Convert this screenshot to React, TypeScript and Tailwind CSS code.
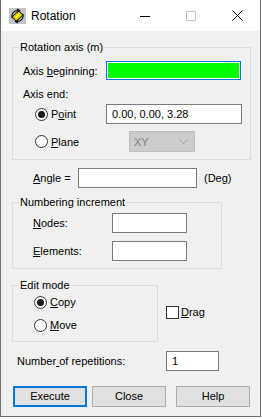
import React from 'react';

const font = "font-['Liberation_Sans','Arial',sans-serif]";

const Radio = ({ checked }: { checked?: boolean }) => (
  <span className="w-[13px] h-[13px] shrink-0 rounded-full border border-[#333333] bg-white flex items-center justify-center">
    {checked && <span className="w-[7px] h-[7px] rounded-full bg-[#1a1a1a]" />}
  </span>
);

const Field = ({ className = '', value = '' }: { className?: string; value?: string }) => (
  <div className={`h-[20px] bg-white border border-[#7a7a7a] flex items-center px-[5px] leading-none ${className}`}>
    {value}
  </div>
);

const Group = ({ title, className = '', children }: { title: string; className?: string; children: React.ReactNode }) => (
  <fieldset className={`border border-[#dcdcdc] ${className}`}>
    <legend className="ml-[6px] px-[1px] leading-[16px]">{title}</legend>
    {children}
  </fieldset>
);

const AppIcon = () => (
  <svg width="17" height="16" viewBox="0 0 17 16" className="shrink-0">
    <rect x="0" y="0" width="17" height="16" fill="#c4c4c4" />
    <g transform="rotate(-45 8.5 8)">
      <rect x="4" y="5" width="9" height="6" fill="#ffff00" stroke="#1a1a1a" strokeWidth="1" />
      <rect x="5.5" y="6.5" width="6" height="3" fill="none" stroke="#e0c000" strokeWidth="1" />
    </g>
    <path d="M3 10 A6 6 0 0 1 9 2.5" fill="none" stroke="#111" strokeWidth="1.2" />
    <path d="M8 1 L10.5 2.6 L8 4.3" fill="none" stroke="#111" strokeWidth="1.2" />
    <path d="M14 6 A6 6 0 0 1 8 13.5" fill="none" stroke="#111" strokeWidth="1.2" />
    <path d="M9 12 L6.5 13.5 L9 15" fill="none" stroke="#111" strokeWidth="1.2" />
  </svg>
);

const TitleBar = () => (
  <div className="h-[31px] bg-white flex items-center">
    <div className="ml-[8px]">
      <AppIcon />
    </div>
    <span className="ml-[5px] text-[12px] text-black">Rotation</span>
    <div className="ml-auto flex h-full">
      <div className="w-[46px] flex items-center justify-center">
        <svg width="10" height="10" viewBox="0 0 10 10">
          <line x1="0" y1="5.5" x2="10" y2="5.5" stroke="#000" strokeWidth="1" />
        </svg>
      </div>
      <div className="w-[46px] flex items-center justify-center">
        <svg width="10" height="10" viewBox="0 0 10 10">
          <rect x="0.5" y="0.5" width="9" height="9" fill="none" stroke="#c8c8c8" strokeWidth="1" />
        </svg>
      </div>
      <div className="w-[46px] flex items-center justify-center">
        <svg width="11" height="11" viewBox="0 0 11 11">
          <line x1="0.5" y1="0.5" x2="10.5" y2="10.5" stroke="#000" strokeWidth="1" />
          <line x1="10.5" y1="0.5" x2="0.5" y2="10.5" stroke="#000" strokeWidth="1" />
        </svg>
      </div>
    </div>
  </div>
);

const Button = ({ label, primary }: { label: string; primary?: boolean }) => (
  <button
    className={`w-[74px] h-[21px] bg-[#e1e1e1] flex items-center justify-center leading-none ${
      primary ? 'border-2 border-[#0078d7]' : 'border border-[#adadad]'
    }`}
  >
    {label}
  </button>
);

const App = () => {
  return (
    <div className={`w-[262px] h-[419px] bg-white ${font} text-[11px] leading-[16px] text-black whitespace-nowrap`}>
      <div className="w-[261px] h-[417px] border-l border-r border-b border-[#707070] flex flex-col">
        <TitleBar />
        <div className="flex-1 bg-[#f0f0f0] pl-[11px]">
          {/* Rotation axis */}
          <Group title="Rotation axis (m)" className="mt-[8px] w-[239px]">
            <div className="pl-[10px] pb-[7px]">
              <div className="flex items-center mt-[6px]">
                <span className="w-[83px]">
                  Axis <u>b</u>eginning:
                </span>
                <div className="w-[135px] h-[19px] border border-[#0078d7] bg-white p-[1px]">
                  <div className="w-full h-full bg-[#00ff00]" />
                </div>
              </div>
              <div className="mt-[6px]">Axis end:</div>
              <div className="flex items-center mt-[2px]">
                <div className="w-[83px] flex items-center">
                  <span className="ml-[12px]"><Radio checked /></span>
                  <span className="ml-[3px]">
                    P<u>o</u>int
                  </span>
                </div>
                <Field className="w-[136px]" value="0.00, 0.00, 3.28" />
              </div>
              <div className="flex items-center mt-[7px]">
                <div className="w-[83px] flex items-center">
                  <span className="ml-[12px]"><Radio /></span>
                  <span className="ml-[3px]">
                    <u>P</u>lane
                  </span>
                </div>
                <div className="ml-[23px] w-[66px] h-[21px] bg-[#cccccc] border border-[#bfbfbf] flex items-center justify-between pl-[4px] pr-[6px] text-[#838383]">
                  <span>XY</span>
                  <svg width="9" height="5" viewBox="0 0 9 5">
                    <polyline points="0.5,0.5 4.5,4.5 8.5,0.5" fill="none" stroke="#a0a0a0" strokeWidth="1" />
                  </svg>
                </div>
              </div>
            </div>
          </Group>

          {/* Angle */}
          <div className="flex items-center mt-[8px]">
            <span className="ml-[21px] w-[45px]">
              <u>A</u>ngle =
            </span>
            <Field className="w-[119px]" />
            <span className="ml-[7px]">(Deg)</span>
          </div>

          {/* Numbering increment */}
          <Group title="Numbering increment" className="mt-[6px] w-[210px]">
            <div className="pl-[20px] pb-[7px]">
              <div className="flex items-center mt-[3px]">
                <span className="w-[79px]">
                  <u>N</u>odes:
                </span>
                <Field className="w-[75px]" />
              </div>
              <div className="flex items-center mt-[8px]">
                <span className="w-[79px]">
                  <u>E</u>lements:
                </span>
                <Field className="w-[75px]" />
              </div>
            </div>
          </Group>

          {/* Edit mode + Drag */}
          <div className="flex items-start mt-[8px]">
            <Group title="Edit mode" className="w-[146px]">
              <div className="pl-[21px] pb-[8px]">
                <div className="flex items-center mt-[1px]">
                  <Radio checked />
                  <span className="ml-[3px]">
                    <u>C</u>opy
                  </span>
                </div>
                <div className="flex items-center mt-[7px]">
                  <Radio />
                  <span className="ml-[3px]">
                    <u>M</u>ove
                  </span>
                </div>
              </div>
            </Group>
            <div className="flex items-center ml-[8px] mt-[27px]">
              <span className="w-[13px] h-[13px] border border-[#333333] bg-white" />
              <span className="ml-[2px]">
                <u>D</u>rag
              </span>
            </div>
          </div>

          {/* Repetitions */}
          <div className="flex items-center mt-[9px]">
            <span className="ml-[5px] w-[149px]">
              Number<u> </u>of repetitions:
            </span>
            <Field className="w-[53px]" value="1" />
          </div>

          {/* Buttons */}
          <div className="flex mt-[15px] ml-[1px]">
            <Button label="Execute" primary />
            <div className="ml-[5px]">
              <Button label="Close" />
            </div>
            <div className="ml-[10px]">
              <Button label="Help" />
            </div>
          </div>
        </div>
      </div>
    </div>
  );
};

export default App;
